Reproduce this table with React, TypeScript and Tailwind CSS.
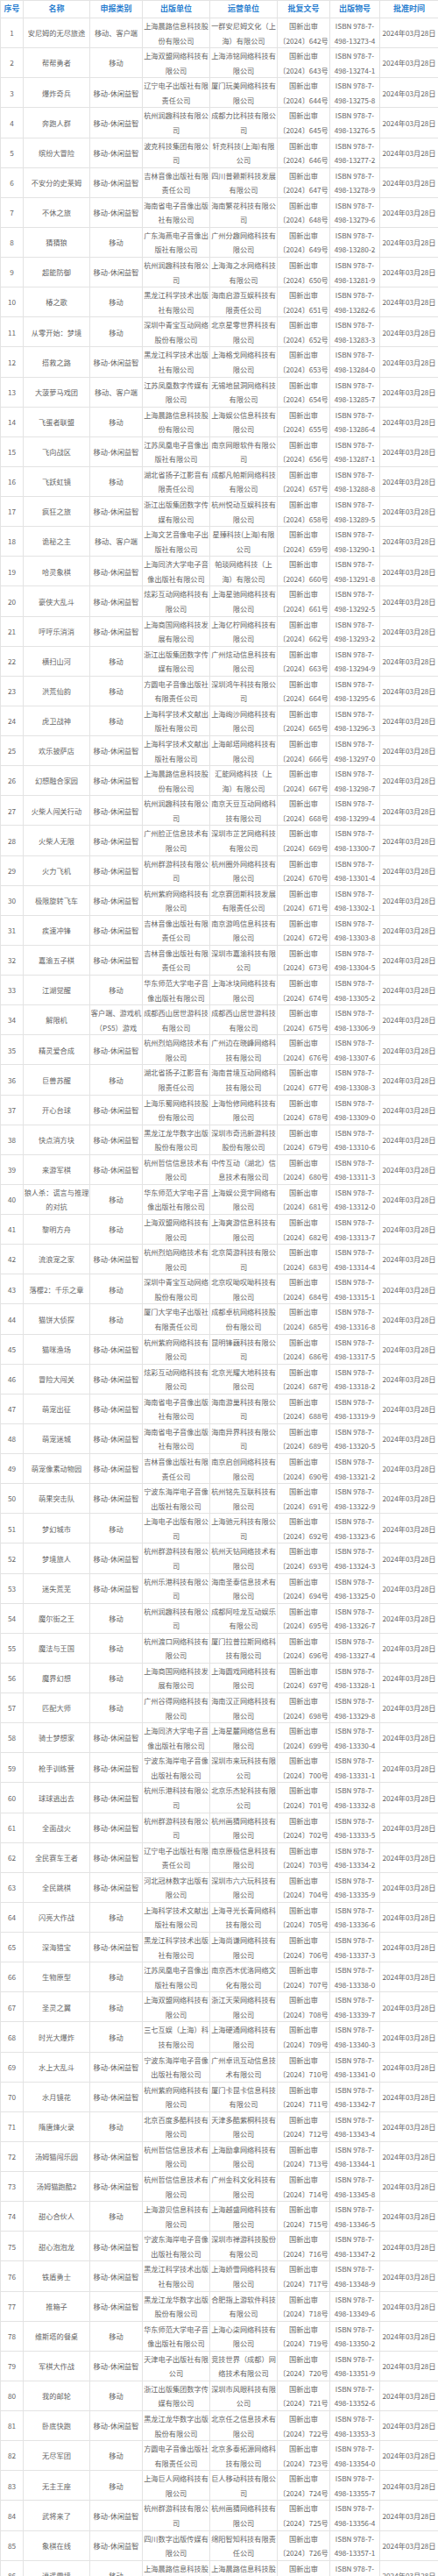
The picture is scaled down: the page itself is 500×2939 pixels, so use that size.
type Row = [string, string, string, string, number, string];

const ROWS: Row[] = [
  ["安尼姆的无尽旅途", "移动、客户端", "上海晨路信息科技股份有限公司", "一群安尼姆文化（上海）有限公司", 642, "13273-4"],
  ["帮帮勇者", "移动", "上海双盟网络科技有限公司", "上海沛铭网络科技有限公司", 643, "13274-1"],
  ["爆炸奇兵", "移动-休闲益智", "辽宁电子出版社有限责任公司", "厦门玩美网络科技有限公司", 644, "13275-8"],
  ["奔跑人群", "移动-休闲益智", "杭州润趣科技有限公司", "成都力比科技有限公司", 645, "13276-5"],
  ["缤纷大冒险", "移动-休闲益智", "波克科技集团有限公司", "轩克科技(上海)有限公司", 646, "13277-2"],
  ["不安分的史莱姆", "移动-休闲益智", "吉林音像出版社有限责任公司", "四川普赖斯科技发展有限公司", 647, "13278-9"],
  ["不休之旅", "移动-休闲益智", "海南省电子音像出版社有限公司", "海南繁花科技有限公司", 648, "13279-6"],
  ["猜猜狼", "移动", "广东海燕电子音像出版社有限公司", "广州分趣网络科技有限公司", 649, "13280-2"],
  ["超能防御", "移动-休闲益智", "杭州润趣科技有限公司", "上海海之水网络科技有限公司", 650, "13281-9"],
  ["椿之歌", "移动", "黑龙江科学技术出版社有限公司", "海南启游互娱科技有限责任公司", 651, "13282-6"],
  ["从零开始：梦境", "移动", "深圳中青宝互动网络股份有限公司", "北京星零世界科技有限公司", 652, "13283-3"],
  ["搭救之路", "移动-休闲益智", "黑龙江科学技术出版社有限公司", "上海格戈网络科技有限公司", 653, "13284-0"],
  ["大菠萝马戏团", "移动、客户端", "江苏凤凰数字传媒有限公司", "无锡地鼠洞网络科技有限公司", 654, "13285-7"],
  ["飞蛋者联盟", "移动", "上海晨路信息科技股份有限公司", "上海娱公信息科技有限公司", 655, "13286-4"],
  ["飞向战区", "移动-休闲益智", "江苏凤凰电子音像出版社有限公司", "南京网眼软件有限公司", 656, "13287-1"],
  ["飞跃虹镜", "移动", "湖北省扬子江影音有限责任公司", "成都凡帕斯网络科技有限公司", 657, "13288-8"],
  ["疯狂之旅", "移动-休闲益智", "浙江出版集团数字传媒有限公司", "杭州悦动互娱科技有限公司", 658, "13289-5"],
  ["诡秘之主", "移动、客户端", "上海文艺音像电子出版社有限公司", "星臻科技(上海)有限公司", 659, "13290-1"],
  ["哈灵象棋", "移动-休闲益智", "上海同济大学电子音像出版社有限公司", "帕琰网络科技（上海）有限公司", 660, "13291-8"],
  ["豪侠大乱斗", "移动-休闲益智", "炫彩互动网络科技有限公司", "上海星驰网络科技有限公司", 661, "13292-5"],
  ["哼哼乐消消", "移动-休闲益智", "上海商国网络科技发展有限公司", "上海亿柠网络科技有限公司", 662, "13293-2"],
  ["横扫山河", "移动", "浙江出版集团数字传媒有限公司", "广州炫动信息科技有限公司", 663, "13294-9"],
  ["洪荒仙韵", "移动", "方圆电子音像出版社有限责任公司", "深圳鸿午科技有限公司", 664, "13295-6"],
  ["虎卫战神", "移动", "上海科学技术文献出版社有限公司", "上海绚沙网络科技有限公司", 665, "13296-3"],
  ["欢乐披萨店", "移动-休闲益智", "上海科学技术文献出版社有限公司", "上海邮塔网络科技有限公司", 666, "13297-0"],
  ["幻想融合家园", "移动-休闲益智", "上海晨路信息科技股份有限公司", "汇能网络科技（上海）有限公司", 667, "13298-7"],
  ["火柴人闯关行动", "移动-休闲益智", "杭州润趣科技有限公司", "南京天豆互动网络科技有限公司", 668, "13299-4"],
  ["火柴人无限", "移动-休闲益智", "广州脸正信息技术有限公司", "深圳市芷艺网络科技有限公司", 669, "13300-7"],
  ["火力飞机", "移动-休闲益智", "杭州群游科技有限公司", "杭州圈外网络科技有限公司", 670, "13301-4"],
  ["极限旋转飞车", "移动-休闲益智", "杭州紫府网络科技有限公司", "北京赛团斯科技发展有限责任公司", 671, "13302-1"],
  ["疾速冲锋", "移动-休闲益智", "吉林音像出版社有限责任公司", "南京游鸣信息科技有限公司", 672, "13303-8"],
  ["嘉渝五子棋", "移动-休闲益智", "吉林音像出版社有限责任公司", "深圳市嘉渝科技有限公司", 673, "13304-5"],
  ["江湖觉醒", "移动", "华东师范大学电子音像出版社有限公司", "上海冰块网络科技有限公司", 674, "13305-2"],
  ["解限机", "客户端、游戏机（PS5）游戏", "成都西山居世游科技有限公司", "成都西山居世游科技有限公司", 675, "13306-9"],
  ["精灵爱合成", "移动-休闲益智", "杭州烈焰网络技术有限公司", "广州边在晓峰网络科技有限公司", 676, "13307-6"],
  ["巨兽苏醒", "移动", "湖北省扬子江影音有限责任公司", "海南昔境互动网络科技有限公司", 677, "13308-3"],
  ["开心台球", "移动-休闲益智", "上海乐蜀网络科技股份有限公司", "上海怡修网络科技有限公司", 678, "13309-0"],
  ["快点消方块", "移动-休闲益智", "黑龙江龙华数字出版股份有限公司", "深圳市奇迅新游科技股份有限公司", 679, "13310-6"],
  ["来游军棋", "移动-休闲益智", "杭州哲信信息技术有限公司", "中传互动（湖北）信息技术有限公司", 680, "13311-3"],
  ["狼人杀：谎言与推理的对抗", "移动", "华东师范大学电子音像出版社有限公司", "上海娱公竞宇网络有限公司", 681, "13312-0"],
  ["黎明方舟", "移动", "上海双盟网络科技有限公司", "上海爽游信息科技有限公司", 682, "13313-7"],
  ["流浪宠之家", "移动-休闲益智", "杭州烈焰网络技术有限公司", "北京简游科技有限公司", 683, "13314-4"],
  ["落樱2：千乐之章", "移动", "深圳中青宝互动网络股份有限公司", "北京叹呦叹呦科技有限公司", 684, "13315-1"],
  ["猫饼大侦探", "移动", "厦门大学电子出版社有限责任公司", "成都卓杭网络科技股份有限公司", 685, "13316-8"],
  ["猫咪渔场", "移动-休闲益智", "杭州紫府网络科技有限公司", "昆明锋巍科技有限公司", 686, "13317-5"],
  ["冒险大闯关", "移动-休闲益智", "炫彩互动网络科技有限公司", "北京光耀大地科技有限公司", 687, "13318-2"],
  ["萌宠出征", "移动-休闲益智", "海南省电子音像出版社有限公司", "海南游巢科技有限公司", 688, "13319-9"],
  ["萌宠迷城", "移动-休闲益智", "海南省电子音像出版社有限公司", "海南异界科技有限公司", 689, "13320-5"],
  ["萌宠像素动物园", "移动-休闲益智", "吉林音像出版社有限责任公司", "南京启创网络科技有限公司", 690, "13321-2"],
  ["萌果突击队", "移动-休闲益智", "宁波东海岸电子音像出版社有限公司", "杭州铭先互联科技有限公司", 691, "13322-9"],
  ["梦幻城市", "移动", "上海电子出版有限公司", "上海驰元科技有限公司", 692, "13323-6"],
  ["梦境旅人", "移动-休闲益智", "杭州群游科技有限公司", "杭州天钻网络技术有限公司", 693, "13324-3"],
  ["迷失荒芜", "移动-休闲益智", "杭州乐港科技有限公司", "海南圣泰信息技术有限公司", 694, "13325-0"],
  ["魔尔街之王", "移动", "杭州润趣科技有限公司", "成都阿哇龙互动娱乐有限公司", 695, "13326-7"],
  ["魔法与王国", "移动", "杭州渡口网络科技有限公司", "厦门拉普拉斯网络科技有限公司", 696, "13327-4"],
  ["魔界幻想", "移动", "上海商国网络科技发展有限公司", "上海圆戏网络科技有限公司", 697, "13328-1"],
  ["匹配大师", "移动", "广州谷得网络科技有限公司", "海南汉正网络科技有限公司", 698, "13329-8"],
  ["骑士梦想家", "移动-休闲益智", "上海同济大学电子音像出版社有限公司", "上海星麓网络信息有限公司", 699, "13330-4"],
  ["枪手训练营", "移动-休闲益智", "宁波东海岸电子音像出版社有限公司", "深圳市来玩科技有限公司", 700, "13331-1"],
  ["球球逃出去", "移动-休闲益智", "杭州乐港科技有限公司", "北京乐杰轮科技有限公司", 701, "13332-8"],
  ["全面战火", "移动-休闲益智", "杭州群游科技有限公司", "杭州画猜网络科技有限公司", 702, "13333-5"],
  ["全民赛车王者", "移动-休闲益智", "辽宁电子出版社有限责任公司", "南京原极信息科技有限公司", 703, "13334-2"],
  ["全民跳棋", "移动-休闲益智", "河北冠林数字出版有限公司", "深圳市六六玩科技有限公司", 704, "13335-9"],
  ["闪亮大作战", "移动", "上海科学技术文献出版社有限公司", "上海寻光长青网络科技有限公司", 705, "13336-6"],
  ["深海猎宝", "移动-休闲益智", "黑龙江科学技术出版社有限公司", "上海尚谦网络科技有限公司", 706, "13337-3"],
  ["生物原型", "移动", "江苏凤凰电子音像出版社有限公司", "南京西木优洛网络文化有限公司", 707, "13338-0"],
  ["圣灵之翼", "移动", "上海双盟网络科技有限公司", "浙江天荣网络科技有限公司", 708, "13339-7"],
  ["时光大爆炸", "移动", "三七互娱（上海）科技有限公司", "上海硬通网络科技有限公司", 709, "13340-3"],
  ["水上大乱斗", "移动-休闲益智", "宁波东海岸电子音像出版社有限公司", "广州卓讯互动信息技术有限公司", 710, "13341-0"],
  ["水月镜花", "移动-休闲益智", "杭州紫府网络科技有限公司", "厦门卡昆卡信息科技有限公司", 711, "13342-7"],
  ["隋唐烽火录", "移动", "北京百度多酷科技有限公司", "天津多酷紫桐科技有限公司", 712, "13343-4"],
  ["汤姆猫闯乐园", "移动-休闲益智", "杭州哲信信息技术有限公司", "上海励拿网络科技有限公司", 713, "13344-1"],
  ["汤姆猫跑酷2", "移动-休闲益智", "杭州哲信信息技术有限公司", "广州金科文化科技有限公司", 714, "13345-8"],
  ["甜心合伙人", "移动", "上海游贝信息科技有限公司", "上海越盛网络科技有限公司", 715, "13346-5"],
  ["甜心泡泡龙", "移动-休闲益智", "宁波东海岸电子音像出版社有限公司", "深圳市禅游科技股份有限公司", 716, "13347-2"],
  ["铁盾勇士", "移动-休闲益智", "黑龙江科学技术出版社有限公司", "上海娇雪网络科技有限公司", 717, "13348-9"],
  ["推箱子", "移动-休闲益智", "黑龙江龙华数字出版股份有限公司", "合肥指上游软件科技有限公司", 718, "13349-6"],
  ["维斯塔的餐桌", "移动", "华东师范大学电子音像出版社有限公司", "上海心柒网络科技有限公司", 719, "13350-2"],
  ["军棋大作战", "移动-休闲益智", "天津电子出版社有限公司", "竞技世界（成都）网络技术有限公司", 720, "13351-9"],
  ["我的邮轮", "移动", "浙江出版集团数字传媒有限公司", "深圳市风眼科技有限公司", 721, "13352-6"],
  ["卧底快跑", "移动-休闲益智", "黑龙江龙华数字出版股份有限公司", "北京任之信息技术有限公司", 722, "13353-3"],
  ["无尽军团", "移动", "方圆电子音像出版社有限责任公司", "北京多泰拓源网络科技有限公司", 723, "13354-0"],
  ["无主王座", "移动", "上海巨人网络科技有限公司", "巨人移动科技有限公司", 724, "13355-7"],
  ["武将来了", "移动-休闲益智", "杭州群游科技有限公司", "杭州画猜网络科技有限公司", 725, "13356-4"],
  ["象棋在线", "移动-休闲益智", "四川数字出版传媒有限公司", "绵阳智知科技有限责任公司", 726, "13357-1"],
  ["逍遥雪境", "移动", "上海晨路信息科技股份有限公司", "上海晨路信息科技股份有限公司", 727, "13358-8"],
];

const HEADERS = ["序号", "名称", "申报类别", "出版单位", "运营单位", "批复文号", "出版物号", "批准时间"];

const cell = "border border-[#e3e3e3] p-0 text-center align-middle";

export default function App() {
  return (
    <div
      className="w-[500px] h-[2939px] overflow-hidden bg-white text-[#666] text-[8.2px] leading-[16.5px]"
      style={{ fontFamily: '"Noto Sans CJK SC", "Noto Sans", sans-serif' }}
    >
      <table className="w-[500px] table-fixed border-collapse">
        <colgroup>
          <col className="w-[26px]" />
          <col className="w-[76px]" />
          <col className="w-[60px]" />
          <col className="w-[77px]" />
          <col className="w-[77px]" />
          <col className="w-[60px]" />
          <col className="w-[57px]" />
          <col className="w-[67px]" />
        </colgroup>
        <thead>
          <tr className="h-[20px]">
            {HEADERS.map((h) => (
              <th key={h} className={`${cell} font-bold text-[#2b7fd0] text-[9px]`}>
                {h}
              </th>
            ))}
          </tr>
        </thead>
        <tbody>
          {ROWS.map((r, i) => (
            <tr key={i} className="h-[34.14px]">
              <td className={cell}>{i + 1}</td>
              <td className={cell}>{r[0]}</td>
              <td className={cell}>{r[1]}</td>
              <td className={cell}>{r[2]}</td>
              <td className={cell}>{r[3]}</td>
              <td className={`${cell} whitespace-nowrap`}>
                国新出审
                <br />〔2024〕{r[4]}号
              </td>
              <td className={`${cell} whitespace-nowrap`}>
                ISBN 978-7-
                <br />
                498-{r[5]}
              </td>
              <td className={`${cell} whitespace-nowrap`}>2024年03月28日</td>
            </tr>
          ))}
        </tbody>
      </table>
    </div>
  );
}
